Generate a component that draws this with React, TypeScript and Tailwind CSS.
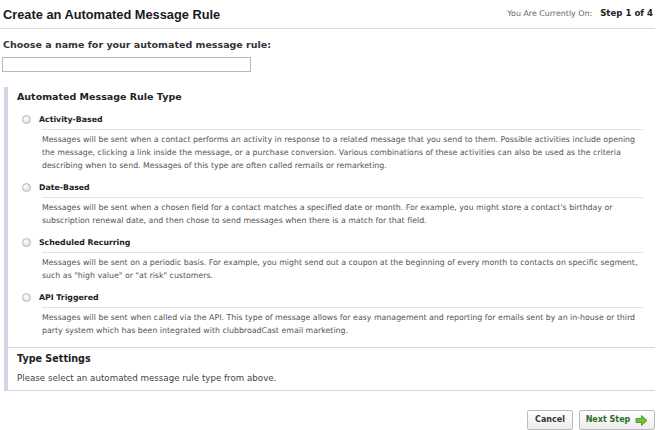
import React from "react";

const types = [
  {
    title: "Activity-Based",
    text: "Messages will be sent when a contact performs an activity in response to a related message that you send to them. Possible activities include opening the message, clicking a link inside the message, or a purchase conversion. Various combinations of these activities can also be used as the criteria describing when to send. Messages of this type are often called remails or remarketing.",
  },
  {
    title: "Date-Based",
    text: "Messages will be sent when a chosen field for a contact matches a specified date or month. For example, you might store a contact's birthday or subscription renewal date, and then chose to send messages when there is a match for that field.",
  },
  {
    title: "Scheduled Recurring",
    text: 'Messages will be sent on a periodic basis. For example, you might send out a coupon at the beginning of every month to contacts on specific segment, such as "high value" or "at risk" customers.',
  },
  {
    title: "API Triggered",
    text: "Messages will be sent when called via the API. This type of message allows for easy management and reporting for emails sent by an in-house or third party system which has been integrated with clubbroadCast email marketing.",
  },
];

const Radio = () => (
  <span className="inline-block w-[9px] h-[9px] rounded-full border border-[#b8b8b8] bg-[radial-gradient(circle_at_40%_40%,#ffffff,#d4d4d4)] shrink-0" />
);

export default function App() {
  return (
    <div className="w-[661px] h-[430px] bg-white text-[#222] font-['DejaVu_Sans',sans-serif] overflow-hidden">
      {/* header */}
      <div className="flex items-center justify-between pl-[3px] pr-[2px] pt-[7px] pb-[5px] border-b border-[#dcdcdc] mr-[6px]">
        <h1 className="font-['Liberation_Sans',sans-serif] font-bold text-[12.8px] leading-[16px] text-[#1a1a1a]">
          Create an Automated Message Rule
        </h1>
        <div className="flex items-baseline gap-[8px] mb-[3px]">
          <span className="text-[7.9px] text-[#666]">You Are Currently On:</span>
          <span className="text-[8.6px] font-bold text-[#222]">Step 1 of 4</span>
        </div>
      </div>

      {/* name */}
      <div className="pl-[3px] pt-[10px]">
        <div className="text-[9.5px] font-bold text-[#333] leading-[12px]">
          Choose a name for your automated message rule:
        </div>
        <input
          type="text"
          className="block mt-[6px] ml-[-1px] w-[249px] h-[15px] border border-[#b8b8b8] bg-white outline-none"
        />
      </div>

      {/* main panel */}
      <div className="mt-[15px] ml-[4px] mr-[6px] border-l-[4px] border-[#d4d4e6]">
        <div className="pl-[9px] pr-[12px] pt-[3px]">
          <div className="text-[9.5px] font-bold text-[#222] leading-[14px]">
            Automated Message Rule Type
          </div>
          <div className="flex flex-col pt-[9px] gap-[9px]">
            {types.map((t) => (
              <div key={t.title} className="flex flex-col">
                <div className="flex items-center gap-[8px] pl-[5px]">
                  <Radio />
                  <span className="text-[7.8px] font-bold text-[#222] leading-[13px]">
                    {t.title}
                  </span>
                </div>
                <div className="ml-[25px] border-t border-[#e4e4e4] mt-[3px] pt-[3px] text-[7.85px] leading-[13px] text-[#555]">
                  {t.text}
                </div>
              </div>
            ))}
          </div>
        </div>

        <div className="mt-[10px] border-t border-b border-[#d4d4e0] pl-[9px] pt-[4px] pb-[6px]">
          <div className="text-[9.6px] font-bold text-[#222] leading-[14px]">Type Settings</div>
          <div className="text-[8.7px] text-[#444] leading-[12px] mt-[6px]">
            Please select an automated message rule type from above.
          </div>
        </div>
      </div>

      {/* buttons */}
      <div className="flex justify-end gap-[6px] mr-[6px] mt-[19px]">
        <button className="h-[20px] w-[46px] border border-[#bcbcbc] rounded-[2px] bg-[linear-gradient(#ffffff,#ececec)] text-[8px] font-bold text-[#333] flex items-center justify-center">
          Cancel
        </button>
        <button className="h-[20px] w-[76px] border border-[#bcbcbc] rounded-[2px] bg-[linear-gradient(#ffffff,#ececec)] text-[8px] font-bold text-[#2f6b2a] flex items-center justify-center gap-[5px]">
          Next Step
          <svg width="13" height="11" viewBox="0 0 13 11">
            <polygon points="1,3.5 6.5,3.5 6.5,0.5 12,5.5 6.5,10.5 6.5,7.5 1,7.5" fill="#6cc23a" stroke="#3f8f24" strokeWidth="0.8" />
          </svg>
        </button>
      </div>
    </div>
  );
}
